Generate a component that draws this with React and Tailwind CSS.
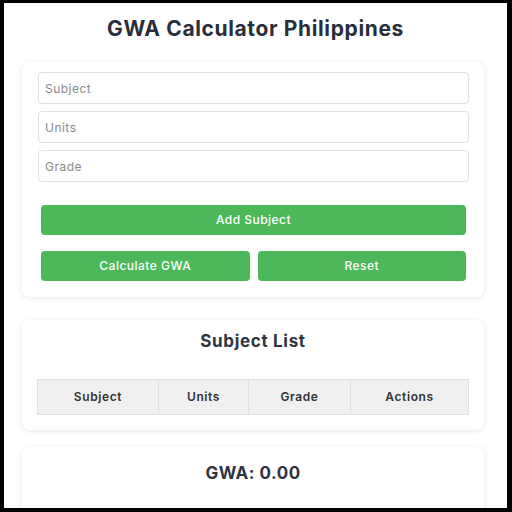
const FONT = { fontFamily: 'Inter, "Open Sans", sans-serif' }

const COLUMNS = [
  { label: 'Subject', w: 'w-[120px]' },
  { label: 'Units', w: 'w-[90px]' },
  { label: 'Grade', w: 'w-[102px]' },
  { label: 'Actions', w: 'flex-1' },
]

function Card({ className = '', children }) {
  return (
    <div className={`ml-[18px] mr-[23px] rounded-lg bg-white shadow-[0_1px_6px_rgba(0,0,0,0.1)] ${className}`}>
      {children}
    </div>
  )
}

export default function App() {
  return (
    <div
      className="w-[512px] h-[512px] overflow-hidden bg-white border-t-[3px] border-l-4 border-r-[5px] border-b-4 border-black"
      style={FONT}
    >
      {/* Title */}
      <h1 className="text-center text-[21px] font-bold tracking-[0.03em] text-[#2a2d3a] pt-[14px] pb-[21px] leading-[24px]">
        GWA Calculator Philippines
      </h1>

      {/* Input form */}
      <Card className="pl-4 pr-[15px] pt-[10px] pb-[16px]">
        <div className="flex flex-col gap-[7px]">
          {['Subject', 'Units', 'Grade'].map((p) => (
            <input
              key={p}
              placeholder={p}
              className="h-[32px] w-full rounded border border-[#e0e0e0] px-[6px] text-[12px] tracking-[0.04em] text-[#333] placeholder:text-[#8a8a8a] outline-none"
            />
          ))}
        </div>

        <div className="px-[3px] mt-[23px] flex flex-col gap-[16px]">
          <button className="h-[30px] w-full rounded bg-[#4cb85a] text-white text-[12px] font-medium tracking-[0.04em]">
            Add Subject
          </button>
          <div className="flex gap-2">
            <button className="h-[30px] flex-1 rounded bg-[#4cb85a] text-white text-[12px] font-medium tracking-[0.04em]">
              Calculate GWA
            </button>
            <button className="h-[30px] flex-1 rounded bg-[#4cb85a] text-white text-[12px] font-medium tracking-[0.04em]">
              Reset
            </button>
          </div>
        </div>
      </Card>

      {/* Subject list */}
      <Card className="mt-[23px] pl-[15px] pr-[15px] pt-[9px] pb-[15px]">
        <h2 className="text-center text-[17px] font-bold tracking-[0.04em] text-[#2e3442] leading-[24px] mb-[26px]">
          Subject List
        </h2>
        <div className="flex border border-[#e0e0e0] bg-[#f0f0f0] h-[36px]">
          {COLUMNS.map((c, i) => (
            <div
              key={c.label}
              className={`${c.w} flex items-center justify-center text-[12px] font-semibold tracking-[0.05em] text-[#333] ${i > 0 ? 'border-l border-[#e0e0e0]' : ''}`}
            >
              {c.label}
            </div>
          ))}
        </div>
      </Card>

      {/* Result */}
      <Card className="mt-[17px] h-[80px] pt-[14px]">
        <p className="text-center text-[17px] font-bold tracking-[0.03em] text-[#2e3442] leading-[24px]">GWA: 0.00</p>
      </Card>
    </div>
  )
}
